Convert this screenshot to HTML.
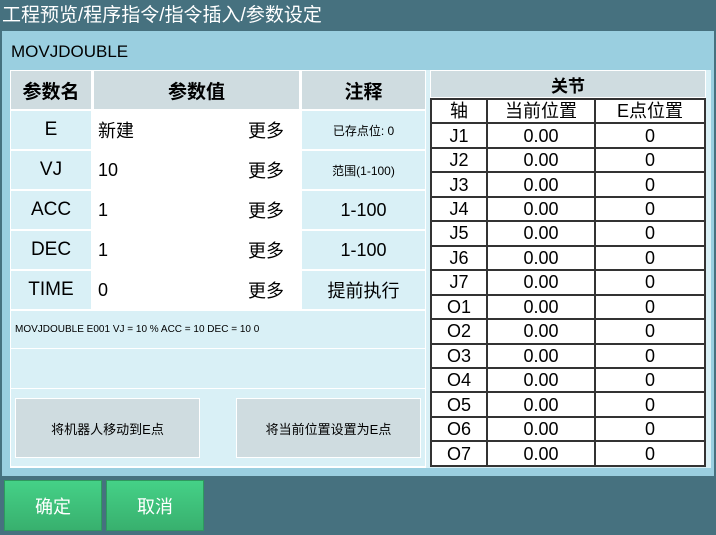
<!DOCTYPE html>
<html><head><meta charset="utf-8"><style>
*{margin:0;padding:0;box-sizing:border-box}
body{width:716px;height:535px;overflow:hidden;background:#46717f;font-family:"Liberation Sans","Noto Sans CJK SC",sans-serif;position:relative}
.a{position:absolute}
.c{display:flex;align-items:center;justify-content:center;color:#000}
.l{display:flex;align-items:center;color:#000}
.hd{background:#cfdce0;font-weight:bold;font-size:19px}
.nm{background:#d9f0f6;font-size:19px}
.v{background:#fff;font-size:18px;padding-left:4px}
.m{background:#fff;font-size:18px}
.n{background:#d9f0f6}
table{border-collapse:collapse;position:absolute;left:430px;top:98px;width:276px;height:369px;background:#fff}
td{border:2px solid #333;text-align:center;font-size:18px;line-height:20px;padding:0}
</style></head><body>
<div class="a" style="left:0;top:0;width:716px;height:30px;color:#fff;font-size:19px;line-height:31px;padding-left:2px">工程预览/程序指令/指令插入/参数设定</div>
<div class="a" style="left:2px;top:31px;width:712px;height:445px;background:#9acfe0"></div>
<div class="a" style="left:11px;top:42px;font-size:17px;color:#000">MOVJDOUBLE</div>
<div class="a" style="left:10px;top:70px;width:417px;height:398px;background:#fff"></div>
<div class="a c hd" style="left:11px;top:71px;width:80px;height:38px">参数名</div>
<div class="a c hd" style="left:94px;top:71px;width:205px;height:38px">参数值</div>
<div class="a c hd" style="left:302px;top:71px;width:123px;height:38px">注释</div>

<div class="a c nm" style="left:11px;top:111px;width:80px;height:38px">E</div>
<div class="a l v" style="left:94px;top:111px;width:137px;height:38px">新建</div>
<div class="a c m" style="left:233px;top:111px;width:66px;height:38px">更多</div>
<div class="a c n" style="left:302px;top:111px;width:123px;height:38px;font-size:12px">已存点位: 0</div>

<div class="a c nm" style="left:11px;top:151px;width:80px;height:38px">VJ</div>
<div class="a l v" style="left:94px;top:151px;width:137px;height:38px">10</div>
<div class="a c m" style="left:233px;top:151px;width:66px;height:38px">更多</div>
<div class="a c n" style="left:302px;top:151px;width:123px;height:38px;font-size:12px">范围(1-100)</div>

<div class="a c nm" style="left:11px;top:191px;width:80px;height:38px">ACC</div>
<div class="a l v" style="left:94px;top:191px;width:137px;height:38px">1</div>
<div class="a c m" style="left:233px;top:191px;width:66px;height:38px">更多</div>
<div class="a c n" style="left:302px;top:191px;width:123px;height:38px;font-size:18px">1-100</div>

<div class="a c nm" style="left:11px;top:231px;width:80px;height:38px">DEC</div>
<div class="a l v" style="left:94px;top:231px;width:137px;height:38px">1</div>
<div class="a c m" style="left:233px;top:231px;width:66px;height:38px">更多</div>
<div class="a c n" style="left:302px;top:231px;width:123px;height:38px;font-size:18px">1-100</div>

<div class="a c nm" style="left:11px;top:271px;width:80px;height:38px">TIME</div>
<div class="a l v" style="left:94px;top:271px;width:137px;height:38px">0</div>
<div class="a c m" style="left:233px;top:271px;width:66px;height:38px">更多</div>
<div class="a c n" style="left:302px;top:271px;width:123px;height:38px;font-size:18px">提前执行</div>

<div class="a l n" style="left:11px;top:311px;width:414px;height:37px;font-size:10px;padding-left:4px">MOVJDOUBLE E001 VJ = 10 % ACC = 10 DEC = 10 0</div>
<div class="a n" style="left:11px;top:349px;width:414px;height:39px"></div>
<div class="a n" style="left:11px;top:389px;width:414px;height:77px"></div>
<div class="a c" style="left:15px;top:398px;width:185px;height:60px;background:#cfdce0;border:1px solid #fff;font-size:13px">将机器人移动到E点</div>
<div class="a c" style="left:236px;top:398px;width:185px;height:60px;background:#cfdce0;border:1px solid #fff;font-size:13px">将当前位置设置为E点</div>

<div class="a" style="left:426px;top:70px;width:285px;height:398px;background:#d9f0f6"></div>
<div class="a" style="left:430px;top:70px;width:276px;height:397px;background:#fff"></div>
<div class="a c hd" style="left:431px;top:71px;width:274px;height:26px;font-size:17px">关节</div>
<table>
<tr><td style="width:56px">轴</td><td style="width:108px">当前位置</td><td>E点位置</td></tr>
<tr><td>J1</td><td>0.00</td><td>0</td></tr>
<tr><td>J2</td><td>0.00</td><td>0</td></tr>
<tr><td>J3</td><td>0.00</td><td>0</td></tr>
<tr><td>J4</td><td>0.00</td><td>0</td></tr>
<tr><td>J5</td><td>0.00</td><td>0</td></tr>
<tr><td>J6</td><td>0.00</td><td>0</td></tr>
<tr><td>J7</td><td>0.00</td><td>0</td></tr>
<tr><td>O1</td><td>0.00</td><td>0</td></tr>
<tr><td>O2</td><td>0.00</td><td>0</td></tr>
<tr><td>O3</td><td>0.00</td><td>0</td></tr>
<tr><td>O4</td><td>0.00</td><td>0</td></tr>
<tr><td>O5</td><td>0.00</td><td>0</td></tr>
<tr><td>O6</td><td>0.00</td><td>0</td></tr>
<tr><td>O7</td><td>0.00</td><td>0</td></tr>
</table>

<div class="a c" style="left:4px;top:480px;width:98px;height:51px;background:linear-gradient(#45d187,#38b06e);border:1px solid #2e9a5e;color:#fff;font-size:18px">确定</div>
<div class="a c" style="left:106px;top:480px;width:98px;height:51px;background:linear-gradient(#45d187,#38b06e);border:1px solid #2e9a5e;color:#fff;font-size:18px">取消</div>
</body></html>
